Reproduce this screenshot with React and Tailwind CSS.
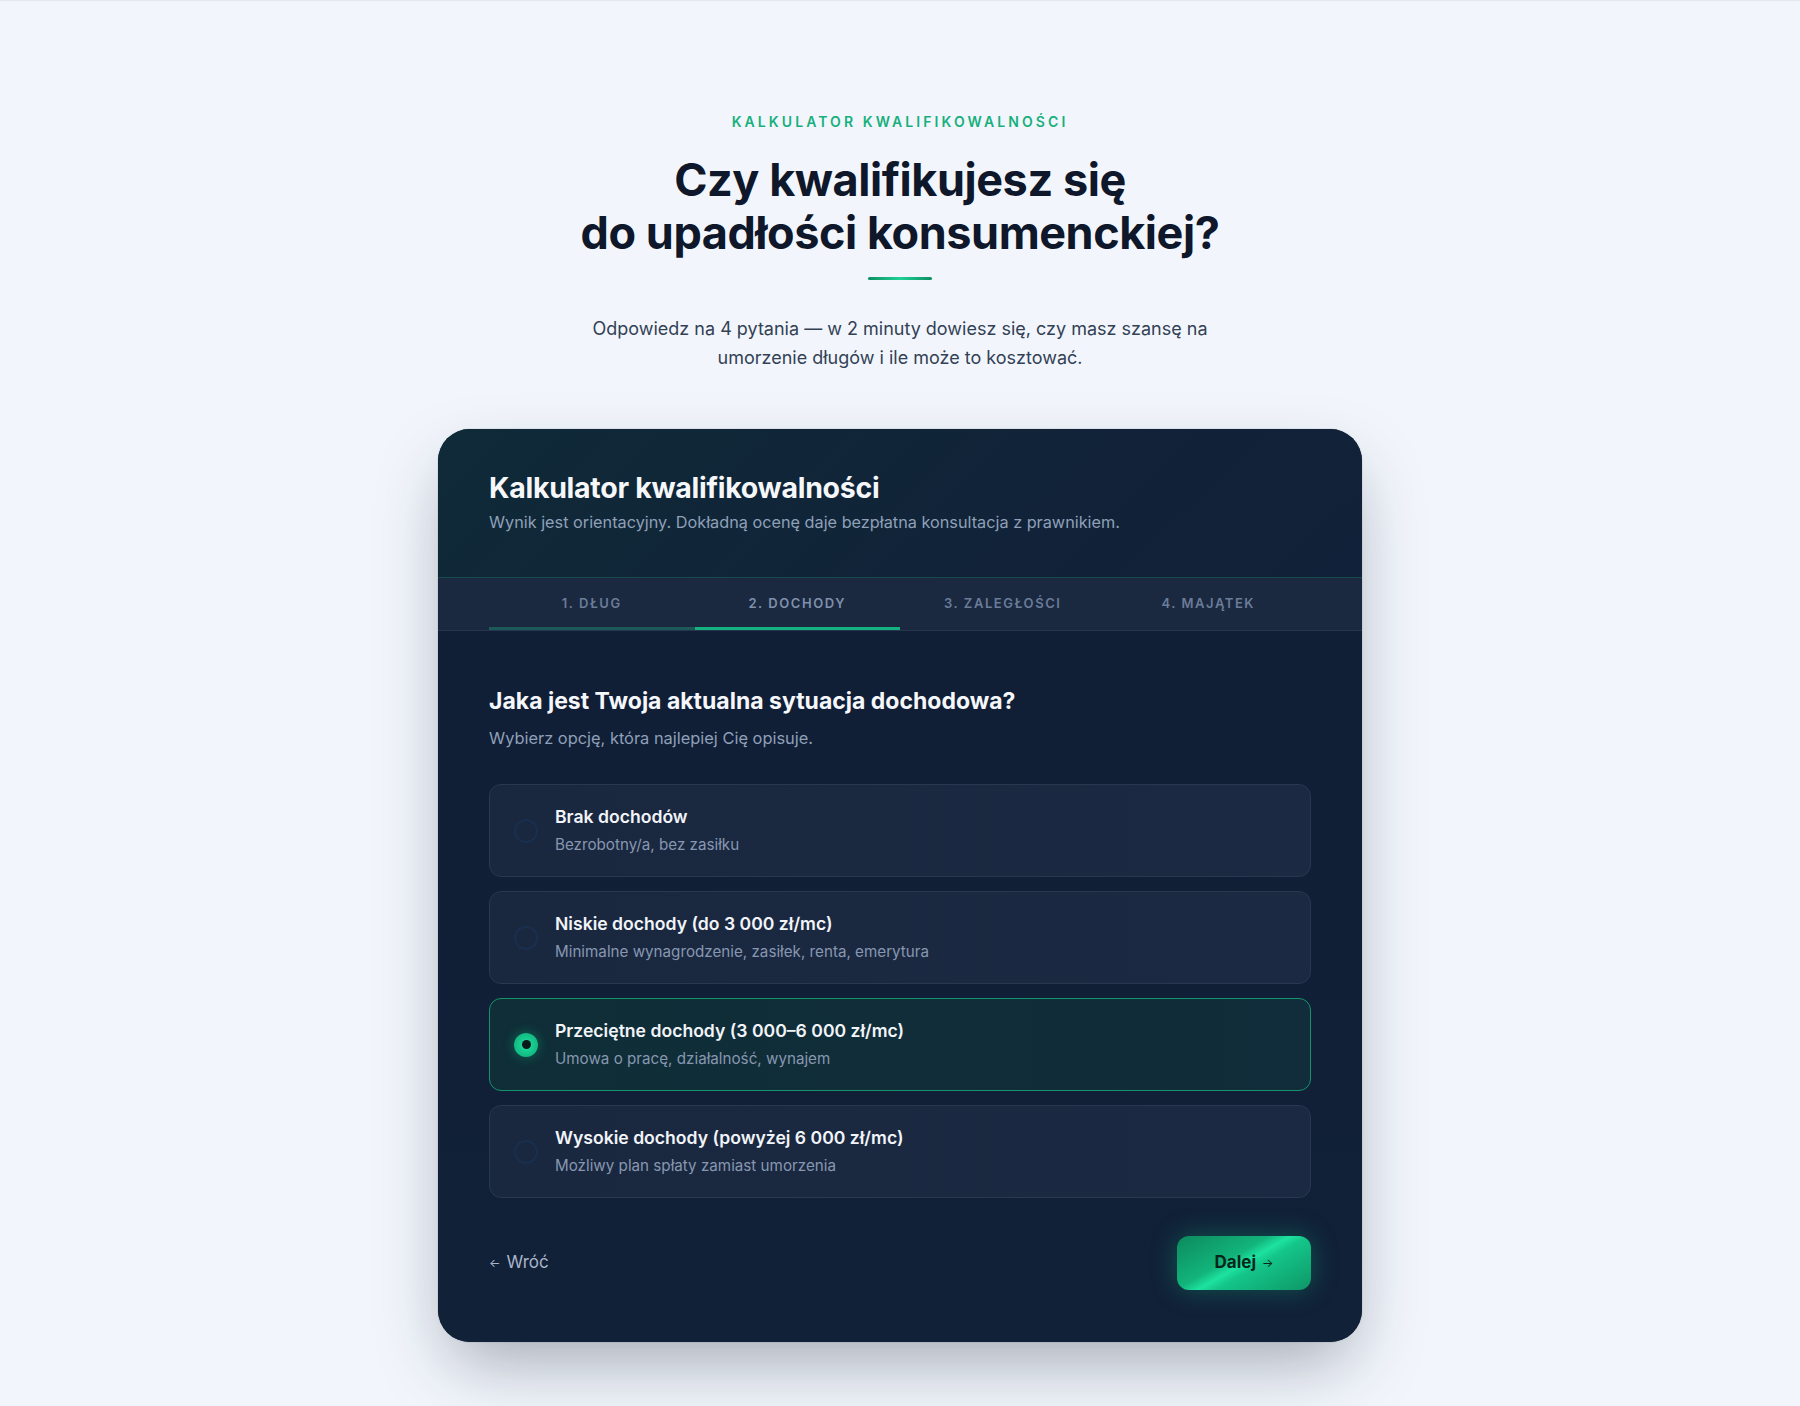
import React, { useState } from 'react'

const tabs = ['1. DŁUG', '2. DOCHODY', '3. ZALEGŁOŚCI', '4. MAJĄTEK'];

const options = [
  { title: 'Brak dochodów', desc: 'Bezrobotny/a, bez zasiłku' },
  { title: 'Niskie dochody (do 3 000 zł/mc)', desc: 'Minimalne wynagrodzenie, zasiłek, renta, emerytura' },
  { title: 'Przeciętne dochody (3 000–6 000 zł/mc)', desc: 'Umowa o pracę, działalność, wynajem' },
  { title: 'Wysokie dochody (powyżej 6 000 zł/mc)', desc: 'Możliwy plan spłaty zamiast umorzenia' },
];

const App = () => {
  const [selected, setSelected] = useState(2);
  const step = 1;

  return (
    <div className="min-h-[1406px] bg-[#f2f6fc] border-t border-[#e3e8ef] font-['Inter',sans-serif] flex flex-col items-center pt-[111px]">
      {/* hero */}
      <p className="text-[14px] leading-[20px] font-semibold tracking-[0.22em] text-[#17b07c]">
        KALKULATOR KWALIFIKOWALNOŚCI
      </p>
      <h1 className="mt-[21px] text-center text-[45px] leading-[53px] font-bold tracking-[-0.01em] text-[#0f172a]">
        Czy kwalifikujesz się
        <br />
        do upadłości konsumenckiej?
      </h1>
      <div className="mt-[18px] h-[3px] w-[64px] rounded-full bg-[linear-gradient(90deg,#0e8f62,#1fd196,#0e8f62)]"></div>
      <p className="mt-[34px] max-w-[640px] text-center text-[18px] leading-[29px] text-[#334155]">
        Odpowiedz na 4 pytania — w 2 minuty dowiesz się, czy masz szansę na umorzenie długów i ile może to kosztować.
      </p>

      {/* card */}
      <div className="mt-[57px] w-[924px] overflow-hidden rounded-[32px] bg-[#101f36] shadow-[0_30px_70px_-12px_rgba(15,23,42,0.35),0_0_0_1px_rgba(15,23,42,0.06)]">
        {/* header */}
        <div className="bg-[linear-gradient(135deg,#0f2a38_0%,#112338_60%,#112139_100%)] px-[51px] pt-[42px] pb-[43px]">
          <h2 className="text-[28.5px] leading-[34px] font-bold tracking-[-0.01em] text-[#f5f7fa]">Kalkulator kwalifikowalności</h2>
          <p className="mt-[5px] text-[16.25px] leading-[24px] text-[#8fa0b8]">
            Wynik jest orientacyjny. Dokładną ocenę daje bezpłatna konsultacja z prawnikiem.
          </p>
        </div>

        {/* tabs */}
        <div className="border-t border-[#174a4c] border-b border-b-[#263650] bg-[#1a2840] px-[51px]">
          <div className="grid grid-cols-4">
            {tabs.map((t, i) => (
              <div key={t} className="relative flex h-[52px] items-center justify-center">
                <span className={`text-[13px] font-semibold tracking-[0.12em] ${i === step ? 'text-[#7f90aa]' : 'text-[#6a7c98]'}`}>{t}</span>
                {i < step && <div className="absolute bottom-0 left-0 right-0 h-[3px] bg-[#1d5a57]"></div>}
                {i === step && <div className="absolute bottom-0 left-0 right-0 h-[3px] bg-[#13b27f]"></div>}
              </div>
            ))}
          </div>
        </div>

        {/* body */}
        <div className="px-[51px] pt-[55px] pb-[52px] bg-[linear-gradient(180deg,#101e36_0%,#112138_100%)]">
          <h3 className="text-[23px] leading-[30px] font-bold text-[#f5f7fa]">Jaka jest Twoja aktualna sytuacja dochodowa?</h3>
          <p className="mt-[10px] text-[16.4px] leading-[24px] text-[#8fa0b8]">Wybierz opcję, która najlepiej Cię opisuje.</p>

          <div className="mt-[34px] flex flex-col gap-[14px]">
            {options.map((o, i) => {
              const active = i === selected;
              return (
                <button
                  key={o.title}
                  onClick={() => setSelected(i)}
                  className={`flex h-[93px] items-center gap-[17px] rounded-[12px] border px-[24px] text-left ${active
                    ? 'border-[#13946b] bg-[linear-gradient(90deg,#0f2e37_0%,#112c3a_100%)]'
                    : 'border-[#28384f] bg-[linear-gradient(90deg,#19273f_0%,#1b2a42_100%)]'}`}
                >
                  {active ? (
                    <span className="flex size-[24px] shrink-0 items-center justify-center rounded-full bg-[radial-gradient(circle_at_50%_50%,#1fe3a0_0%,#12b981_70%,#0e9a6b_100%)] shadow-[0_0_12px_rgba(16,185,129,0.45)]">
                      <span className="size-[9px] rounded-full bg-[#0a1a1a]"></span>
                    </span>
                  ) : (
                    <span className="size-[24px] shrink-0 rounded-full border-2 border-[#1a2f4e]"></span>
                  )}
                  <span className="flex flex-col">
                    <span className="text-[17.6px] leading-[24px] font-semibold text-[#f1f4f8]">{o.title}</span>
                    <span className="mt-[5px] text-[15.2px] leading-[22px] text-[#8797b0]">{o.desc}</span>
                  </span>
                </button>
              );
            })}
          </div>

          {/* footer */}
          <div className="mt-[38px] flex items-center justify-between">
            <button className="flex items-center gap-[6px] text-[17px] text-[#a9b5c8]">
              <span className="text-[12px]">←</span>
              <span>Wróć</span>
            </button>
            <button className="flex h-[54px] w-[134px] items-center justify-center gap-[6px] rounded-[12px] bg-[linear-gradient(150deg,#0d8a5d_0%,#12b47b_40%,#1de2a0_50%,#14c58a_58%,#0e9766_100%)] shadow-[0_0_26px_rgba(16,185,129,0.35)]">
              <span className="text-[17px] font-bold text-[#072619]">Dalej</span>
              <span className="text-[12px] text-[#072619]">→</span>
            </button>
          </div>
        </div>
      </div>
    </div>
  )
}

export default App
